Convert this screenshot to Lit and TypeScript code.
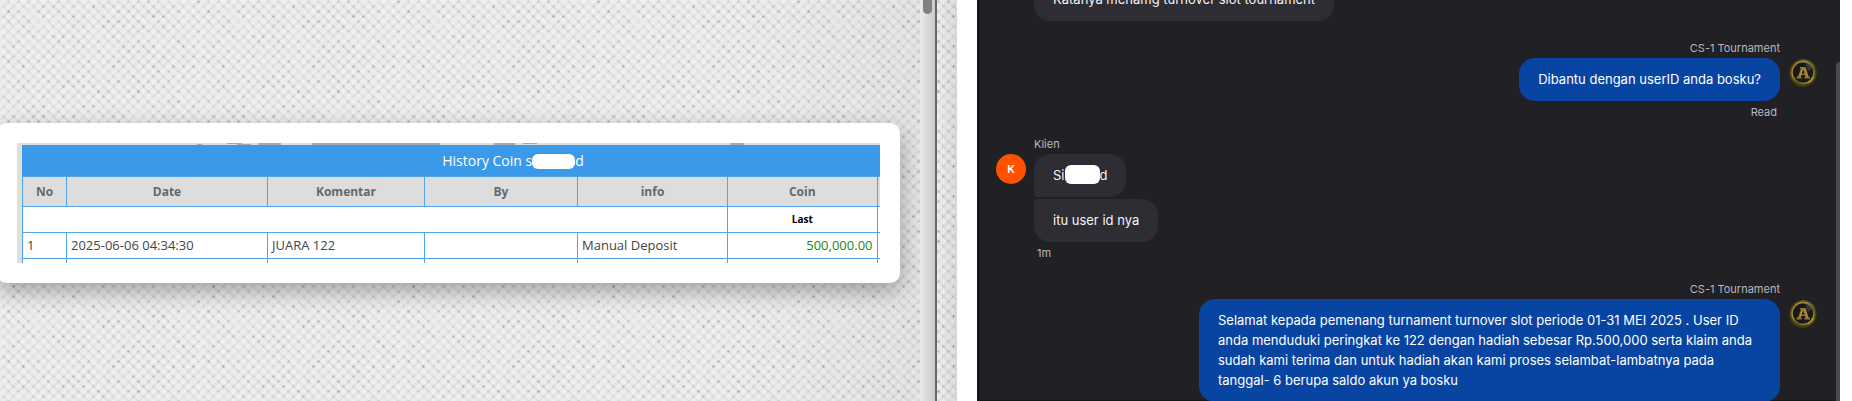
import { LitElement, html, css, svg, unsafeCSS } from "lit";
import { customElement, property } from "lit/decorators.js";

// Woven paper texture: a staggered 5px lattice of dots joined by faint diagonal threads.
function paperTile(): string {
  let seed = 7;
  const rand = () => (seed = (seed * 16807) % 2147483647) / 2147483647;
  const w = 200, h = 150;
  let marks = "";
  for (let j = 0; j < h / 5; j++) {
    for (let i = 0; i < w / 5; i++) {
      const x = 3.5 + 5 * i, y = 1.5 + 5 * j;
      if ((i + j) % 2) {
        const dot = (0.02 + 0.22 * rand() * rand()).toFixed(2);
        marks += `<circle cx='${x}' cy='${y}' r='1.2' fill='black' fill-opacity='${dot}'/>`;
        const a = (0.01 + 0.035 * rand()).toFixed(3);
        const b = (0.01 + 0.03 * rand()).toFixed(3);
        marks += `<path d='M${x} ${y}l5 5' stroke='black' stroke-width='2.4' stroke-opacity='${a}'/>`;
        marks += `<path d='M${x} ${y}l-5 5' stroke='black' stroke-width='2.4' stroke-opacity='${b}'/>`;
      } else {
        const l = (0.05 + 0.2 * rand()).toFixed(2);
        marks += `<circle cx='${x}' cy='${y}' r='2' fill='white' fill-opacity='${l}'/>`;
      }
    }
  }
  return encodeURIComponent(`<svg xmlns='http://www.w3.org/2000/svg' width='${w}' height='${h}'>${marks}</svg>`).replace(/'/g, "%27");
}
const paper = unsafeCSS(`url("data:image/svg+xml,${paperTile()}")`);

@customElement("coin-history")
class CoinHistory extends LitElement {
  static styles = css`
    :host { display: block; background: #fff; border-radius: 10px; padding: 20px; margin-left: -3px; margin-right: 20px;
      box-shadow: 0 8px 22px rgba(0, 0, 0, 0.32); font-family: "Open Sans", "Noto Sans", sans-serif; }
    .shot { background: #dfe0dc; height: 120px; overflow: hidden; display: flex; flex-direction: column; }
    .strip { height: 2px; flex: none; width: 100%; display: block; }
    table { border-collapse: collapse; table-layout: fixed; margin-left: 5px; width: calc(100% - 5px); background: #fff; }
    caption { background: #3a9ae9; color: #fff; font-size: 14px; line-height: 31px; height: 31px; padding-left: 124px; }
    .mask { display: inline-block; width: 43px; height: 15px; border-radius: 6px; background: #fff; vertical-align: -3px; }
    th, td { border: 1px solid #4fa5ea; padding: 0 4px; font-size: 13px; line-height: 25px; height: 25px; white-space: nowrap; }
    thead th { background: #ddd; color: #686868; font-size: 12px; line-height: 29px; height: 29px; }
    .sub th { font-size: 10px; color: #000; }
    td { text-align: left; color: #444; }
    .amount { text-align: right; color: #148a14; }
    .edge { padding: 0; border-right: 0; }
    .c1 { width: 44px; } .c2 { width: 201px; } .c3 { width: 157px; } .c4 { width: 153px; } .c5 { width: 150px; } .c7 { width: 3px; }
  `;
  render() {
    return html`<div class="shot">
      <svg class="strip" viewBox="0 0 863 2" preserveAspectRatio="none"><g fill="#a5a9b0"><rect x="180" y="1" width="5" height="1"/><rect x="210" width="15" height="1"/><rect x="220" y="1" width="14" height="1"/><rect x="241" width="23" height="2"/><rect x="295" width="128" height="2"/><rect x="477" width="21" height="2"/><rect x="506" width="14" height="1"/><rect x="713" width="14" height="2"/></g></svg>
      <table>
        <caption>History Coin s<span class="mask"></span>d</caption>
        <colgroup><col class="c1"><col class="c2"><col class="c3"><col class="c4"><col class="c5"><col><col class="c7"></colgroup>
        <thead><tr><th>No</th><th>Date</th><th>Komentar</th><th>By</th><th>info</th><th>Coin</th><th class="edge"></th></tr></thead>
        <tbody>
          <tr class="sub"><td colspan="5"></td><th>Last</th><td class="edge"></td></tr>
          <tr><td>1</td><td>2025-06-06 04:34:30</td><td>JUARA 122</td><td></td><td>Manual Deposit</td><td class="amount">500,000.00</td><td class="edge"></td></tr>
          <tr><td></td><td></td><td></td><td></td><td></td><td></td><td class="edge"></td></tr>
        </tbody>
      </table></div>`;
  }
}

@customElement("agent-logo")
class AgentLogo extends LitElement {
  static styles = css`:host { display: block; width: 30px; height: 30px; } svg { display: block; }`;
  render() {
    return svg`<svg width="30" height="30" viewBox="0 0 30 30" role="img" aria-label="Agent">
      <defs><radialGradient id="g"><stop offset="0" stop-color="#15140f"/><stop offset=".7" stop-color="#28240f"/><stop offset=".82" stop-color="#4e4614"/><stop offset="1" stop-color="#1d1b18"/></radialGradient>
      <linearGradient id="r" x1="0" y1="0" x2="1" y2="1"><stop offset="0" stop-color="#8f7c22"/><stop offset=".3" stop-color="#a8932e"/><stop offset=".6" stop-color="#6f6126"/><stop offset="1" stop-color="#bda935"/></linearGradient></defs>
      <circle cx="15" cy="15" r="15" fill="url(#g)"/>
      <path d="M14 1a14 14 0 0 1 13 8l-5 3-6-7-7 2-3-2z" fill="#777568" opacity=".45"/>
      <circle cx="15" cy="14.500" r="11" fill="#1b1a18" stroke="url(#r)" stroke-width="1.500"/>
      <path d="M17 4a11 11 0 0 1 8 6l-5 3z" fill="#6b6a66" opacity=".4"/>
      <path d="M12 9h5.500l3 9.500h1.500v2h-5.500v-2h1l-.5-1.500h-4l-.5 1.500h1v2H8.500v-2H10l3-8h-1zm3 2.500L13.700 15.500h2.800z" fill="#927530"/>
      <path d="M14.500 10.500 12 18.500M17 10l2.500 8.500" stroke="#c9ab56" stroke-width=".7"/>
      <path d="M20 25a12 12 0 0 0 6-6" fill="none" stroke="#d9c638" stroke-width="1.500" opacity=".4"/>
    </svg>`;
  }
}

@customElement("chat-group")
class ChatGroup extends LitElement {
  @property() name = "";
  @property() status = "";
  @property({ type: Boolean, reflect: true }) mine = false;
  static styles = css`
    :host { display: grid; grid-template-columns: 30px minmax(0, 1fr); column-gap: 8px; padding: 0 18px 0 19px; }
    :host([mine]) { grid-template-columns: minmax(0, 1fr) 30px; }
    .body { display: flex; flex-direction: column; align-items: flex-start; }
    :host([mine]) .body { align-items: flex-end; order: -1; }
    .name, .status { font-size: 11px; line-height: 14px; height: 14px; color: #b8b8be; }
    .name { margin-bottom: 3px; }
    .status { margin-top: 4px; padding: 0 3px; }
    .face { padding-top: 17px; }
    .list { display: flex; flex-direction: column; align-items: inherit; gap: 2px; }
  `;
  render() {
    return html`<div class="face"><slot name="face"></slot></div>
      <div class="body"><div class="name">${this.name}</div><div class="list"><slot></slot></div>
      ${this.status ? html`<div class="status">${this.status}</div>` : ""}</div>`;
  }
}

@customElement("app-root")
class AppRoot extends LitElement {
  static styles = css`
    :host { display: flex; height: 100vh; overflow: hidden; background: #fff; }
    .page { flex: 957 1 0; min-width: 0; display: flex; background-color: #ececec; background-image: ${paper}; }
    .main { flex: 1; min-width: 0; display: flex; flex-direction: column; justify-content: center;
      background: linear-gradient(90deg, transparent 80%, rgba(0, 0, 0, 0.04)); }
    .main coin-history { margin-top: 5px; }
    .track { width: 15px; background: linear-gradient(90deg, #e9e9e9, #c9c9c9); border-right: 2px solid #666; display: flex; justify-content: center; }
    .thumb { width: 9px; height: 14px; background: #808080; border-radius: 0 0 5px 5px; }
    .side { width: 20px; background: linear-gradient(90deg, transparent, rgba(0, 0, 0, 0.08)); }
    .chat { flex: 863 1 0; min-width: 0; margin: 0 12px 0 20px; display: flex; background: #212025;
      box-shadow: inset 3px -1px 0 #17171b; font-family: Inter, sans-serif; overflow: hidden; }
    .log { flex: 1; min-width: 0; display: flex; flex-direction: column; margin-top: -22px; }
    .bubble { max-width: 543px; padding: 11px 19px 12px; border-radius: 16px; background: #2e2d33; color: #f4f4f6; font-size: 13px; line-height: 20px; }
    .first { border-bottom-left-radius: 3px; }
    .last { border-top-left-radius: 3px; }
    .blue { background: #0845a3; color: #fff; }
    .early { margin-left: 57px; align-self: flex-start; }
    .g1 { margin-top: 20px; } .g2 { margin-top: 18px; } .g3 { margin-top: 22px; }
    .k { width: 30px; height: 30px; border-radius: 50%; background: #ff5200; color: #fff; font-size: 11px; font-weight: 600; line-height: 30px; text-align: center; }
    .mask { display: inline-block; width: 35px; height: 19px; margin: -4px 0; border-radius: 6px; background: #fff; vertical-align: baseline; }
    .rail { width: 4px; padding-top: 62px; display: flex; }
    .bar { flex: 1; background: #4c4b55; border-radius: 4px 0 0 0; }
  `;
  render() {
    return html`
      <section class="page"><div class="main"><coin-history></coin-history></div>
        <div class="track"><div class="thumb"></div></div><div class="side"></div></section>
      <section class="chat"><div class="log">
        <div class="bubble early">Katanya menamg turnover slot tournament</div>
        <chat-group class="g1" mine name="CS-1 Tournament" status="Read"><agent-logo slot="face"></agent-logo>
          <div class="bubble blue">Dibantu dengan userID anda bosku?</div></chat-group>
        <chat-group class="g2" name="Klien" status="1m"><div class="k" slot="face">K</div>
          <div class="bubble first">Si<span class="mask"></span>d</div><div class="bubble last">itu user id nya</div></chat-group>
        <chat-group class="g3" mine name="CS-1 Tournament"><agent-logo slot="face"></agent-logo>
          <div class="bubble blue">Selamat kepada pemenang turnament turnover slot periode 01-31 MEI 2025 . User ID anda menduduki peringkat ke 122 dengan hadiah sebesar Rp.500,000 serta klaim anda sudah kami terima dan untuk hadiah akan kami proses selambat-lambatnya pada tanggal- 6 berupa saldo akun ya bosku</div></chat-group>
      </div><div class="rail"><div class="bar"></div></div></section>`;
  }
}
